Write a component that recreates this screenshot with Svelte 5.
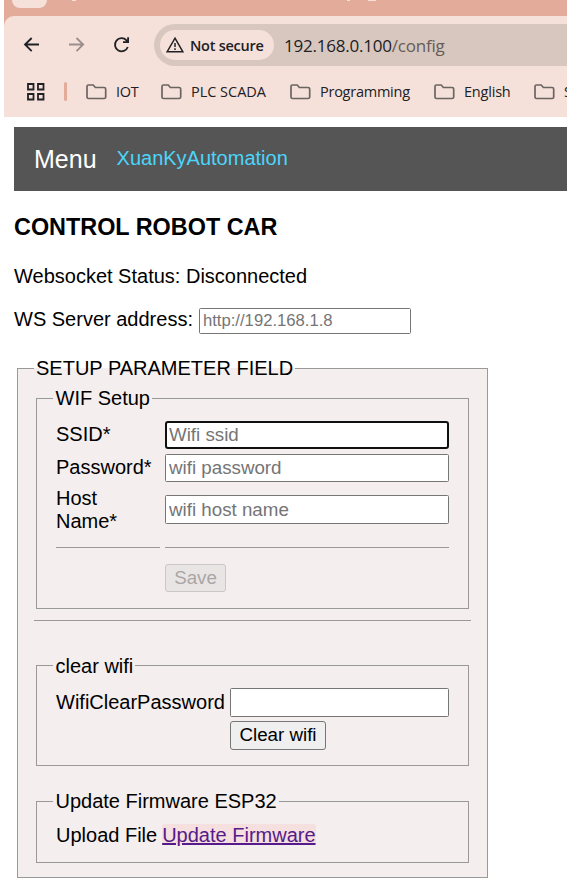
<script>
  const bookmarks = [
    { name: 'IOT', w: 75, ls: -0.3 },
    { name: 'PLC SCADA', w: 129, ls: -0.02 },
    { name: 'Programming', w: 144, ls: -0.25 },
    { name: 'English', w: 100, ls: -0.2 },
    { name: 'S', w: 90, ls: 0 }
  ];
</script>

<div class="screen">
  <header class="browser">
    <div class="tabs"><span class="tab"></span><i class="d1"></i><i class="d2"></i><i class="d3"></i></div>
    <div class="panel">
      <div class="toolbar">
        <svg class="back" width="18" height="18" viewBox="0 0 18 18"><path d="M16 8.500H2.200M8.700 2L2 8.500l6.700 6.700" /></svg>
        <svg class="fwd" width="18" height="18" viewBox="0 0 18 18"><path d="M1 8.500h14M8.500 2l6.700 6.500-6.700 6.700" /></svg>
        <svg class="reload" width="18" height="18" viewBox="0 0 18 18"><path d="M14.800 11A6.600 6.600 0 1 1 13.500 4.300L15 6M15.100 1.200V6.200H10" /></svg>
        <div class="omnibox">
          <div class="chip">
            <svg width="18" height="18" viewBox="0 0 18 18"><path d="M9 2.200L16.800 15.700H1.200Z M9 7v4M9 12.300v1.600" /></svg>
            <span>Not secure</span>
          </div>
          <span class="url">192.168.0.100<em>/config</em></span>
        </div>
      </div>
      <nav class="bookmarks">
        <svg class="apps" width="20" height="20" viewBox="0 0 20 20"><path d="M2 2h5.500v5.500H2zM12 2h5.500v5.500H12zM2 12h5.500v5.500H2zM12 12h5.500v5.500H12z" /></svg>
        <b class="sep"></b>
        {#each bookmarks as b}
          <div class="bm" style="width:{b.w}px;letter-spacing:{b.ls}px">
            <svg width="21" height="16" viewBox="0 0 21 16"><path d="M1 13V2.500Q1 1 2.500 1H7.200L9.400 3.500H18Q19.700 3.500 19.700 5V13Q19.700 14.500 18 14.500H2.500Q1 14.500 1 13Z" /></svg>
            <span>{b.name}</span>
          </div>
        {/each}
      </nav>
    </div>
  </header>

  <main>
    <div class="menu"><span class="brand">Menu</span><span class="link">XuanKyAutomation</span></div>
    <h3>CONTROL ROBOT CAR</h3>
    <p class="status">Websocket Status: Disconnected</p>
    <div class="server"><label for="ws">WS Server address:</label><input id="ws" placeholder="http://192.168.1.8" /></div>

    <fieldset class="outer">
      <legend>SETUP PARAMETER FIELD</legend>
      <fieldset class="wifi">
        <legend>WIF Setup</legend>
        <div class="form">
          <label for="ssid">SSID*</label><input id="ssid" class="focused" placeholder="Wifi ssid" />
          <label for="pw">Password*</label><input id="pw" placeholder="wifi password" />
          <label for="host" class="two">Host Name*</label><input id="host" class="tall" placeholder="wifi host name" />
          <hr /><hr />
          <span></span><button class="save" disabled>Save</button>
        </div>
      </fieldset>
      <hr class="divider" />
      <fieldset class="clear">
        <legend>clear wifi</legend>
        <div class="form">
          <label for="cp" class="two">WifiClearPassword</label><input id="cp" />
          <span></span><button>Clear wifi</button>
        </div>
      </fieldset>
      <fieldset class="update">
        <legend>Update Firmware ESP32</legend>
        <div class="upload"><span>Upload File</span><a href="#update">Update Firmware</a></div>
      </fieldset>
    </fieldset>
  </main>
</div>

<style>
  :global(body) { margin: 0; background: #fff; overflow: hidden; }
  .screen { width: 567px; height: 881px; overflow: hidden; box-sizing: border-box; background: #fff; color: #000; font: 20px/23px "Liberation Sans", Arial, sans-serif; }
  .screen * { box-sizing: border-box; }
  svg { display: block; flex: none; fill: none; stroke: #202124; stroke-width: 1.8; }
  .browser { margin-left: 4px; height: 117px; overflow: hidden; background: #e2ab9a; font-family: "Open Sans", "Noto Sans", sans-serif; color: #202124; }
  .tabs { height: 16px; position: relative; }
  .tab { display: block; margin-left: 8px; width: 35px; height: 8px; background: #f5e0da; border-radius: 0 0 12px 12px; }
  .tabs i { position: absolute; top: 0; height: 1px; background: #f5e0da; }
  .d1 { left: 68px; width: 4px; }
  .d2 { left: 343px; width: 3px; }
  .d3 { left: 364px; width: 8px; }
  .panel { height: 101px; background: #f5e0da; border-top-left-radius: 10px; }
  .toolbar { height: 58px; padding-left: 19px; display: flex; align-items: center; }
  .fwd { margin-left: 27px; stroke: #9b8d89; }
  .reload { margin-left: 27px; }
  .omnibox { margin: 0 0 0 23px; flex: 1; height: 42px; border-radius: 21px 0 0 21px; background: #d8c7bf; display: flex; align-items: center; padding-left: 6px; }
  .chip { width: 114px; height: 30px; border-radius: 15px; background: #f5e0da; display: flex; align-items: center; padding-left: 6px; white-space: nowrap; }
  .chip svg { stroke-width: 1.5; }
  .chip span { margin-left: 6px; font-size: 14.5px; font-weight: 600; letter-spacing: -0.25px; }
  .url { margin-left: 10px; font-size: 17px; letter-spacing: -0.22px; }
  .url em { font-style: normal; color: #655b57; }
  .bookmarks { height: 35px; display: flex; align-items: center; padding-left: 22px; white-space: nowrap; }
  .sep { flex: none; width: 3px; height: 19px; margin-left: 18px; margin-right: 19px; background: #e2ab9a; border-radius: 2px; }
  .bm { flex: none; display: flex; align-items: center; font-size: 14.5px; }
  .bm svg { stroke: #6a6462; stroke-width: 1.7; }
  .bm span { margin-left: 9px; }

  main { padding: 10px 0 0 14px; }
  .menu { height: 64px; background: #555; display: flex; align-items: center; padding-left: 20px; }
  .brand { color: #fff; font-size: 25px; line-height: 29px; }
  .link { color: #4bd5fb; margin: 0 0 1px 20px; }
  h3 { margin: 23px 0 0; font-size: 23.4px; line-height: 27px; }
  .status { margin: 24px 0 0; }
  .server { margin-top: 20px; height: 26px; display: flex; align-items: flex-start; }
  .server input { margin-left: 6px; width: 212px; height: 26px; font-size: 16.67px; }
  input { display: block; margin: 0; border: 1px solid #767676; border-radius: 1.5px; background: #fff; padding: 0 3px; font: 18.75px "Liberation Sans", Arial, sans-serif; outline: none; width: 100%; height: 28px; }
  input::placeholder { color: #757575; opacity: 1; }
  fieldset { margin: 0; border: 1px solid #999; padding: 0; min-width: 0; }
  legend { padding: 0 2px; height: 23px; white-space: nowrap; }
  hr { margin: 0; border: 0; height: 1px; background: #999; width: 100%; }
  .outer { margin: 23px 0 0 3px; width: 471px; height: 521px; background: #f4eeee; padding: 7px 16px 0; }
  .outer > fieldset { margin: 0 2px; padding: 0 16px; width: 433px; }
  .outer > fieldset > legend { padding: 0 2px 0 2.5px; }
  .wifi { height: 222px; }
  .form { display: grid; column-gap: 5px; margin-left: 3px; align-items: center; }
  .form label { padding-bottom: 2px; }
  .form .two { padding-bottom: 0; }
  .wifi .form { margin-top: 11px; grid-template-columns: 104px 284px; grid-template-rows: 28px 28px 46px 1px 28px; row-gap: 5px; }
  .wifi hr { margin-top: 18px; }
  .wifi .save { margin-top: 40px; }
  .focused { border: 2px solid #101010; border-radius: 3px; padding: 0 2px; }
  .tall { height: 29px; margin-bottom: 1px; }
  button { margin: 0; padding: 0 0 1px; border: 1px solid #767676; border-radius: 3px; background: #efefef; color: #000; font: 18.75px "Liberation Sans", Arial, sans-serif; width: 96px; height: 29px; }
  .save { width: 61px; height: 28px; background: #e9e5e4; border-color: #cbc7c7; color: #aaa6a6; }
  .divider { margin-top: 11px; }
  .outer > .clear { margin-top: 33px; height: 112px; }
  .clear > legend { position: relative; top: 1px; }
  .clear .form { margin-top: 11px; grid-template-columns: 169px 219px; grid-template-rows: 29px 29px; row-gap: 4px; }
  .clear input { height: 29px; }
  .outer > .update { margin-top: 24px; height: 73px; }
  .upload { margin: 11px 0 0 3px; display: flex; gap: 5px; white-space: nowrap; line-height: 23px; }
  a { background: #f5dfdf; border-radius: 3px; color: #551a8b; text-decoration: underline; text-decoration-thickness: 2px; height: 21px; }
</style>
